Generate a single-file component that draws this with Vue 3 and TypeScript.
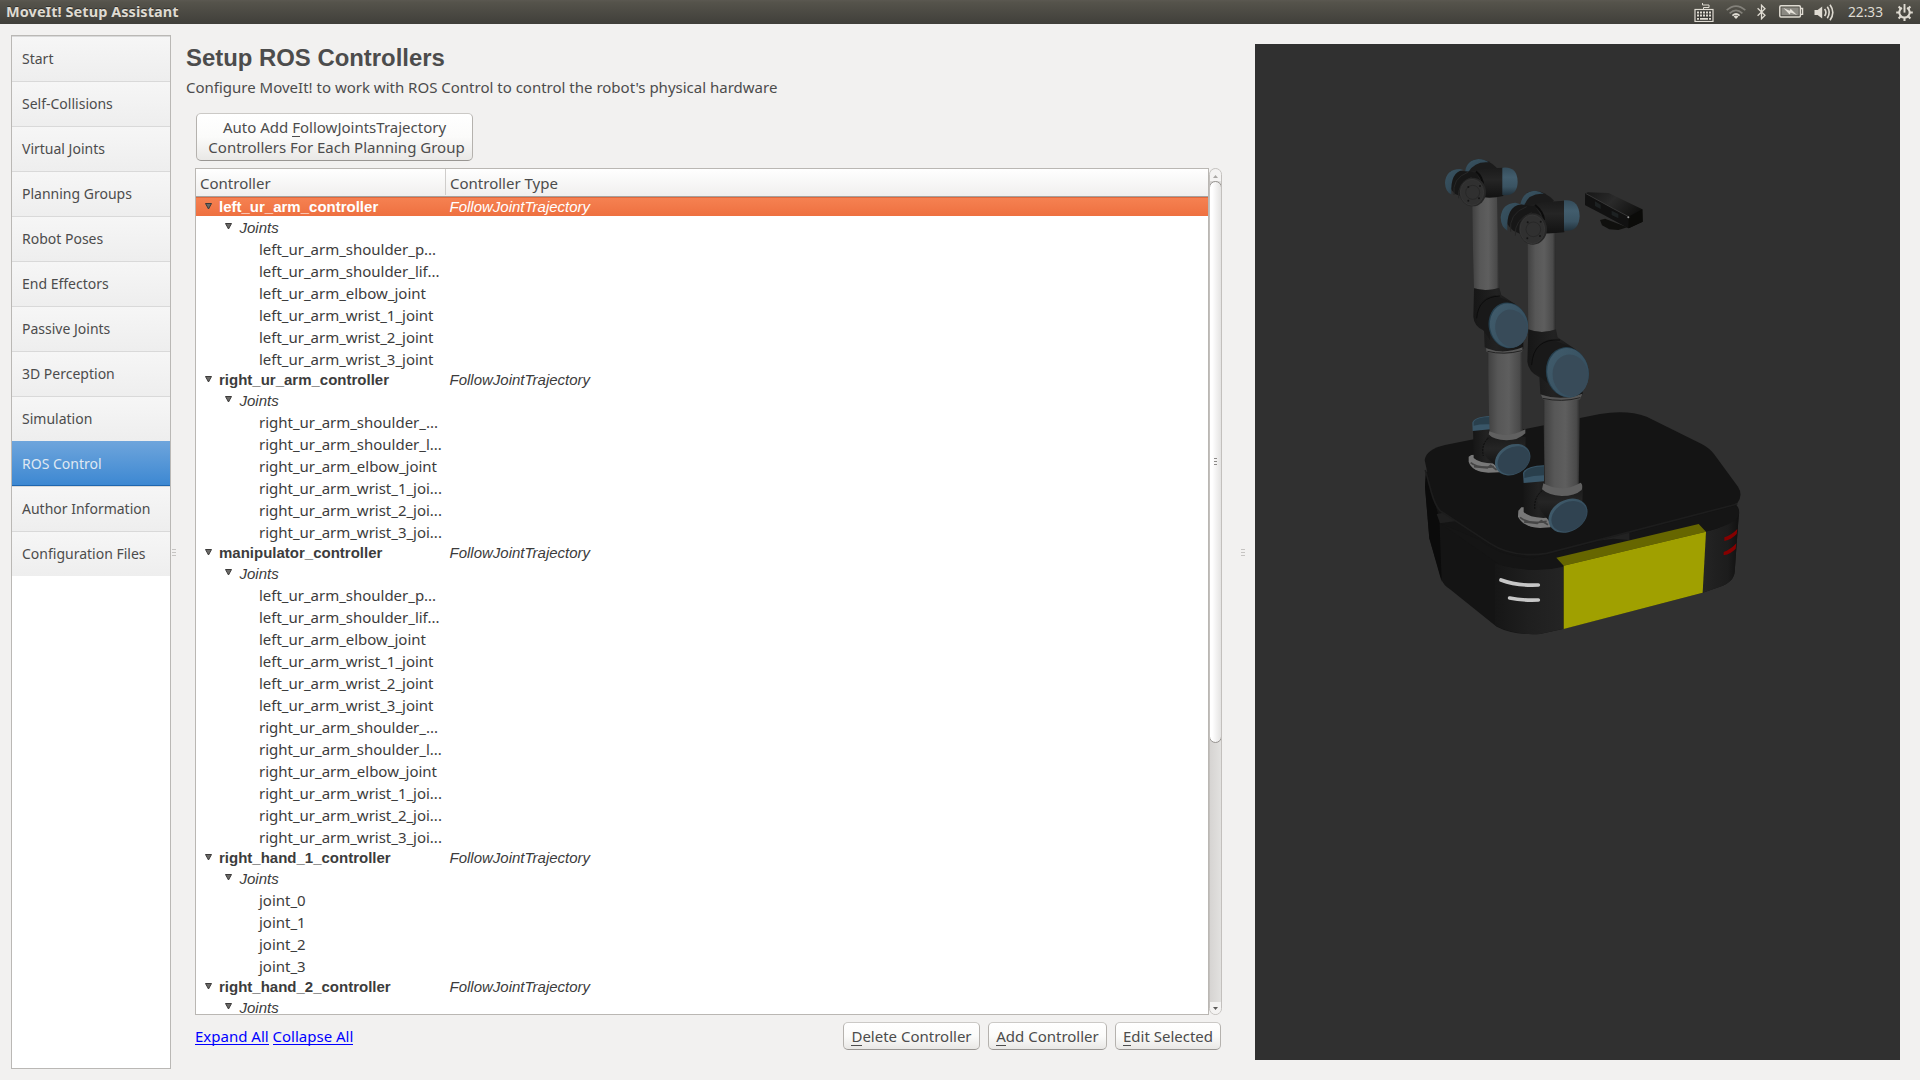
<script setup lang="ts">
import { ref } from 'vue'

interface Controller {
  name: string
  type: string
  joints: string[]
}

const sections: string[] = [
  'Start',
  'Self-Collisions',
  'Virtual Joints',
  'Planning Groups',
  'Robot Poses',
  'End Effectors',
  'Passive Joints',
  '3D Perception',
  'Simulation',
  'ROS Control',
  'Author Information',
  'Configuration Files',
]
const activeSection = ref('ROS Control')

const leftArm: string[] = [
  'left_ur_arm_shoulder_p...',
  'left_ur_arm_shoulder_lif...',
  'left_ur_arm_elbow_joint',
  'left_ur_arm_wrist_1_joint',
  'left_ur_arm_wrist_2_joint',
  'left_ur_arm_wrist_3_joint',
]
const rightArm: string[] = [
  'right_ur_arm_shoulder_...',
  'right_ur_arm_shoulder_l...',
  'right_ur_arm_elbow_joint',
  'right_ur_arm_wrist_1_joi...',
  'right_ur_arm_wrist_2_joi...',
  'right_ur_arm_wrist_3_joi...',
]
const type = 'FollowJointTrajectory'
const controllers: Controller[] = [
  { name: 'left_ur_arm_controller', type, joints: leftArm },
  { name: 'right_ur_arm_controller', type, joints: rightArm },
  { name: 'manipulator_controller', type, joints: [...leftArm, ...rightArm] },
  { name: 'right_hand_1_controller', type, joints: ['joint_0', 'joint_1', 'joint_2', 'joint_3'] },
  { name: 'right_hand_2_controller', type, joints: [] },
]
const selected = ref('left_ur_arm_controller')
</script>

<template>
  <div class="desktop">
    <header class="menubar">
      <span class="window-title">MoveIt! Setup Assistant</span>
      <div class="indicators">
        <svg class="i-keyboard" width="20" height="20" viewBox="0 0 20 20">
          <path d="M9.5 8V5.5H15V3H8.5V1" fill="none" stroke="#dfdbd2" stroke-width="1" />
          <rect x="1" y="7.5" width="18" height="12" fill="#3c3b37" stroke="#dfdbd2" stroke-width="1.2" />
          <path d="M3 10.5H17M3 13.5H17" stroke="#dfdbd2" stroke-width="2" stroke-dasharray="2 1" />
          <path d="M3 16.8H5M6 16.8H14M15 16.8H17" stroke="#dfdbd2" stroke-width="1.8" />
        </svg>
        <svg class="i-wifi" width="20" height="14" viewBox="0 0 20 14" fill="none" stroke-width="1.7">
          <path d="M.7 5.2Q10-3 19.3 5.2" stroke="#83817a" />
          <path d="M3.6 8.3Q10 2.4 16.4 8.3" stroke="#83817a" />
          <path d="M6.4 10.6Q10 7.4 13.6 10.6" stroke="#dfdbd2" />
          <path d="M7.6 11.4Q10 9.6 12.4 11.4L10 14Z" fill="#dfdbd2" stroke="none" />
        </svg>
        <svg class="i-bluetooth" width="9" height="16" viewBox="0 0 9 16">
          <path d="M.6 4.3L8 11.3L4.5 14.8V1.2L8 4.7L.6 11.7" fill="none" stroke="#dfdbd2" stroke-width="1.3" />
        </svg>
        <svg class="i-battery" width="25" height="13" viewBox="0 0 25 13">
          <rect x=".8" y=".8" width="20.6" height="11.2" rx="1.2" fill="none" stroke="#dfdbd2" stroke-width="1.5" />
          <rect x="2.5" y="2.5" width="17.2" height="7.8" fill="#8b8982" />
          <path d="M22 3.5H23.6V9.3H22" fill="none" stroke="#dfdbd2" stroke-width="1.3" />
          <path d="M4.4 3L10.6 5.8L11.6 3.8L18 10L11.7 7.6L10.6 9.4Z" fill="#e6e2da" />
        </svg>
        <svg class="i-volume" width="21" height="17" viewBox="0 0 21 17">
          <path d="M.5 6H3.6L8.2 2.4V14.6L3.6 11H.5Z" fill="#dfdbd2" />
          <g fill="none" stroke="#dfdbd2" stroke-width="1.6">
            <path d="M10.6 5Q13.2 8.5 10.6 12" />
            <path d="M13.3 2.8Q17.2 8.5 13.3 14.2" />
            <path d="M16 .8Q21.6 8.5 16 16.2" />
          </g>
        </svg>
        <span class="clock">22:33</span>
        <svg class="i-session" width="17" height="17" viewBox="0 0 17 17" fill="none" stroke="#dfdbd2">
          <path d="M5.9 3.9A5.2 5.2 0 1 0 11.1 3.9" stroke-width="2" />
          <path d="M8.5 0V8.6" stroke-width="1.9" />
          <path d="M2.6 2.6L4.6 4.6M14.4 2.6L12.4 4.6M.2 8.5H3M14 8.5H16.8M2.6 14.4L4.6 12.4M14.4 14.4L12.4 12.4M8.5 14V16.9" stroke-width="2.1" />
        </svg>
      </div>
    </header>

    <div class="body">
      <nav class="sections">
        <div v-for="s in sections" :key="s" class="section" :class="{ active: s === activeSection }" @click="activeSection = s">{{ s }}</div>
      </nav>
      <div class="grip grip-left"><i /><i /><i /></div>

      <main class="content">
        <h1>Setup ROS Controllers</h1>
        <p class="intro">Configure MoveIt! to work with ROS Control to control the robot's physical hardware</p>
        <button class="btn auto">{{ 'Auto Add ' }}<u>F</u>{{ 'ollowJointsTrajectory \nControllers For Each Planning Group' }}</button>

        <div class="tree-wrap">
          <div class="tree">
            <div class="tree-head">
              <div class="col-name">Controller</div>
              <div class="col-type">Controller Type</div>
            </div>
            <div class="tree-body">
              <template v-for="c in controllers" :key="c.name">
                <div class="row ctrl" :class="{ selected: c.name === selected }" @click="selected = c.name">
                  <div class="name">
                    <svg width="7" height="7" viewBox="0 0 7 7"><path d="M.5 .5H6.5L3.5 6Z" fill="#6b6a68" stroke="#3c3b3a" /></svg>
                    {{ c.name }}
                  </div>
                  <div class="type">{{ c.type }}</div>
                </div>
                <div class="row group">
                  <svg width="7" height="7" viewBox="0 0 7 7"><path d="M.5 .5H6.5L3.5 6Z" fill="#6b6a68" stroke="#3c3b3a" /></svg>
                  Joints
                </div>
                <div v-for="j in c.joints" :key="j" class="row leaf">{{ j }}</div>
              </template>
            </div>
          </div>
          <div class="scrollbar">
            <div class="arrow"><svg width="5" height="3" viewBox="0 0 5 3"><path d="M0 3L2.5 0L5 3Z" fill="#a9a7a4" /></svg></div>
            <div class="thumb"><i /><i /><i /></div>
            <div class="arrow down"><svg width="5" height="3" viewBox="0 0 5 3"><path d="M0 0L2.5 3L5 0Z" fill="#5c5b59" /></svg></div>
          </div>
        </div>

        <div class="actions">
          <div class="links"><a>Expand All</a> <a>Collapse All</a></div>
          <div class="buttons">
            <button class="btn b-del"><span><u>D</u>elete Controller</span></button>
            <button class="btn b-add"><span><u>A</u>dd Controller</span></button>
            <button class="btn b-edit"><span><u>E</u>dit Selected</span></button>
          </div>
        </div>
      </main>

      <div class="grip grip-right"><i /><i /><i /></div>

      <svg class="viewport" width="645" height="1016" viewBox="0 0 1935 3048">
        <defs>
          <linearGradient id="tube">
            <stop offset="0" stop-color="#2c2c2c" /><stop offset=".05" stop-color="#434343" />
            <stop offset=".3" stop-color="#575757" /><stop offset=".6" stop-color="#5e5e5e" />
            <stop offset=".9" stop-color="#4a4a4a" /><stop offset="1" stop-color="#2a2a2a" />
          </linearGradient>
          <linearGradient id="cap" x1="0" y1="0" x2="0" y2="1">
            <stop offset="0" stop-color="#344c5a" /><stop offset=".35" stop-color="#425d6d" />
            <stop offset=".7" stop-color="#3a5362" /><stop offset="1" stop-color="#22323c" />
          </linearGradient>
          <linearGradient id="rearCap" x1="0" y1="0" x2="1" y2="1">
            <stop offset="0" stop-color="#3a5462" /><stop offset=".5" stop-color="#334b59" /><stop offset="1" stop-color="#1d2c35" />
          </linearGradient>
          <linearGradient id="rim" x1="0" y1="0" x2="1" y2="1">
            <stop offset="0" stop-color="#415c6c" /><stop offset=".5" stop-color="#3a5464" /><stop offset="1" stop-color="#31495a" />
          </linearGradient>
          <linearGradient id="shell">
            <stop offset="0" stop-color="#161616" /><stop offset=".45" stop-color="#222" /><stop offset="1" stop-color="#131313" />
          </linearGradient>
          <linearGradient id="shellV" x1="0" y1="0" x2="0" y2="1">
            <stop offset="0" stop-color="#1b1b1b" /><stop offset=".4" stop-color="#252525" /><stop offset="1" stop-color="#121212" />
          </linearGradient>
          <linearGradient id="front">
            <stop offset="0" stop-color="#161616" /><stop offset=".5" stop-color="#1f1f1f" /><stop offset="1" stop-color="#242424" />
          </linearGradient>
          <linearGradient id="frontR">
            <stop offset="0" stop-color="#242424" /><stop offset=".7" stop-color="#1c1c1c" /><stop offset="1" stop-color="#101010" />
          </linearGradient>
          <linearGradient id="sensor" x1="0" y1="0" x2="1" y2=".6">
            <stop offset="0" stop-color="#161616" /><stop offset=".45" stop-color="#2a2a2a" /><stop offset="1" stop-color="#0c0c0b" />
          </linearGradient>
        </defs>
        <rect width="1935" height="3048" fill="#303030" />

        <!-- mobile base -->
        <g transform="translate(435 1188)">
          <path d="M78 95L75 140L88 295L125 420Q130 435 150 448L290 560Q340 586 420 582L492 566L908 458L960 440Q1002 425 1004 395L1017 215Q1016 195 1000 190Z" fill="#141414" />
          <path d="M78 95L75 140L88 295L125 425L118 235Z" fill="#0b0b0b" />
          <path d="M285 370Q380 400 490 376V566L420 582Q340 586 285 556Z" fill="url(#front)" />
          <path d="M915 275Q985 262 1017 215L1004 395Q1002 425 960 440L908 458Z" fill="url(#frontR)" />
          <path d="M110 222L140 217L170 243L120 250Z" fill="#1f1f1f" />
          <path d="M240 300Q300 350 400 355L1005 197Q1022 205 1016 228Q1000 255 915 275L490 380Q400 402 300 375L120 250Z" fill="#151515" />
          <path d="M590 303L688 277V300L640 296Z" fill="#222" />
        </g>
        <g transform="translate(435 828)">
          <path d="M74 420Q78 388 135 375L600 282Q680 268 740 290L905 372Q928 384 942 402L1014 500Q1030 525 1012 550L440 700Q340 715 270 670L120 572Q105 555 95 520Z" fill="#141414" />
          <path d="M76 450L95 520Q105 555 120 572L270 670Q340 715 440 700L1012 552" fill="none" stroke="#1d1d1d" stroke-width="5" />
        </g>
        <g transform="translate(435 1188)">
          <path d="M469 353L896 252L918 275L491 377Z" fill="#666600" />
          <path d="M491 377L918 275L908 458L491 567Z" fill="#a0a000" />
          <g fill="none" stroke="#c6c6c6" stroke-width="11" stroke-linecap="round">
            <path d="M303 420Q350 438 415 435" /><path d="M329 474Q365 482 415 480" />
          </g>
          <path d="M973 292Q995 285 1012 267L1010 282Q995 298 973 303ZM971 336Q993 328 1009 310L1007 326Q993 341 971 346Z" fill="#850000" />
        </g>

        <!-- rear arm -->
        <g transform="translate(435 828)">
          <path d="M214 405L206 410V425Q215 455 265 458L300 457L300 400Z" fill="#787878" />
          <path d="M212 428Q232 446 282 440M222 440L262 444L272 436L290 450" stroke="#464646" fill="none" stroke-width="5" />
          <path d="M219 325L271 318V345L310 410L290 430Q240 432 221 414Z" fill="url(#shell)" />
          <path d="M217 308Q222 290 271 288V328L218 333Z" fill="#395668" />
          <path d="M221 306Q230 291 271 291V313Q240 312 221 317Z" fill="#293f4c" />
          <path d="M262 350H377L376 385Q350 430 290 440L262 415Q240 390 262 350Z" fill="url(#shellV)" />
          <path d="M264 355Q243 375 250 408" fill="none" stroke="#0d0d0d" stroke-width="3" stroke-dasharray="6 3" />
          <path d="M262 94H365L369 345Q320 362 269 345Z" fill="url(#tube)" />
          <path d="M268 334Q320 358 376 328V340Q355 361 320 361Q280 360 266 343Z" fill="#606060" />
          <ellipse cx="338" cy="419" rx="56" ry="44" transform="rotate(-30 338 419)" fill="url(#rim)" />
          <ellipse cx="341" cy="421" rx="51" ry="39" transform="rotate(-30 341 421)" fill="#304351" />
        </g>
        <g transform="translate(435 288)">
          <path d="M215 165H291L298 445Q260 456 222 445Z" fill="url(#tube)" />
          <path d="M222 445Q260 456 298 443L304 465L345 492Q385 530 370 600V627Q310 648 254 622L252 572Q222 560 220 530Z" fill="url(#shell)" />
          <path d="M228 538Q235 470 285 466L345 492L268 545L270 600" fill="#191919" />
          <path d="M300 468Q235 470 230 535" fill="none" stroke="#0c0c0c" stroke-width="3" />
          <path d="M258 625Q310 645 368 622L366 636Q310 648 260 636Z" fill="#565656" />
          <path d="M262 634Q310 646 366 632" fill="none" stroke="#222" stroke-width="3" />
          <ellipse cx="325" cy="556" rx="59" ry="69" transform="rotate(-12 325 556)" fill="#26404f" />
          <ellipse cx="327" cy="557" rx="57" ry="67" transform="rotate(-12 327 557)" fill="url(#rim)" />
          <ellipse cx="334" cy="565" rx="48" ry="57" transform="rotate(-12 334 565)" fill="#384b59" />
          <path d="M195 100Q200 60 235 57Q265 58 290 83L250 110Z" fill="#1b1b1b" />
          <path d="M195 96Q200 60 235 57Q255 58 266 67Q225 63 205 96Z" fill="url(#rearCap)" />
          <path d="M200 100Q240 85 290 84L310 83V168Q280 175 250 172Z" fill="url(#shellV)" />
          <path d="M307 83Q352 78 353 125Q352 170 307 165Z" fill="url(#cap)" />
          <path d="M228 95Q248 110 250 140" fill="none" stroke="#0c0c0c" stroke-width="6" />
          <path d="M150 95Q170 88 228 98L258 150L215 180L165 162Q140 140 150 95Z" fill="#171717" />
          <path d="M135 128Q138 88 180 87L190 90Q150 95 154 163Q136 155 135 128Z" fill="url(#rearCap)" />
          <path d="M162 165Q155 115 205 96M176 175Q170 130 215 112" fill="none" stroke="#262626" stroke-width="3" />
          <ellipse cx="218" cy="156" rx="40" ry="43" fill="#272727" />
          <ellipse cx="216" cy="157" rx="35" ry="39" fill="#303030" stroke="#3a3a3a" stroke-width="2" />
          <circle cx="218" cy="157" r="21" fill="none" stroke="#222" stroke-width="2" />
          <g fill="#151515"><circle cx="205" cy="141" r="3" /><circle cx="240" cy="138" r="3" /><circle cx="237" cy="175" r="3" /><circle cx="205" cy="182" r="3" /></g>
        </g>

        <!-- front arm -->
        <g transform="translate(435 828)">
          <path d="M364 562L355 572L354 590Q370 622 420 624L452 622L450 560Z" fill="#787878" />
          <path d="M360 592Q385 614 440 604M372 606L412 610L424 602L444 614" stroke="#464646" fill="none" stroke-width="5" />
          <path d="M371 480L432 472V520L470 590L430 594Q385 592 371 576Z" fill="url(#shell)" />
          <path d="M369 458Q378 438 432 436V484L371 489Z" fill="#395668" />
          <path d="M373 458Q384 440 432 439V466Q400 466 373 474Z" fill="#293f4c" />
          <path d="M427 505H549L547 545Q520 590 450 607L425 575Q400 540 427 505Z" fill="url(#shellV)" />
          <path d="M425 513Q400 535 405 570" fill="none" stroke="#0d0d0d" stroke-width="3" stroke-dasharray="6 3" />
          <path d="M430 238H540L536 505Q485 525 434 505Z" fill="url(#tube)" />
          <path d="M430 490Q485 520 542 488Q550 495 545 510Q525 528 485 528Q445 526 426 508Z" fill="#606060" />
          <ellipse cx="504" cy="587" rx="62" ry="47" transform="rotate(-30 504 587)" fill="url(#rim)" />
          <ellipse cx="507" cy="589" rx="56" ry="42" transform="rotate(-30 507 589)" fill="#304351" />
        </g>
        <g transform="translate(435 288)">
          <path d="M381 275H466L467 570Q425 582 385 570Z" fill="url(#tube)" />
          <path d="M385 568Q425 584 468 568L473 592L525 627Q570 660 548 740V763Q485 788 421 762L418 712Q385 695 382 665Z" fill="url(#shell)" />
          <path d="M394 685Q395 605 455 598L520 625L440 680L442 730" fill="#191919" />
          <path d="M480 600Q400 595 395 675" fill="none" stroke="#0c0c0c" stroke-width="3" />
          <path d="M423 764Q485 784 547 761L540 778Q485 788 429 778Z" fill="#565656" />
          <path d="M428 775Q485 788 541 773" fill="none" stroke="#222" stroke-width="3" />
          <ellipse cx="502" cy="697" rx="64" ry="76" transform="rotate(-10 502 697)" fill="#26404f" />
          <ellipse cx="504" cy="698" rx="62" ry="74" transform="rotate(-10 504 698)" fill="url(#rim)" />
          <ellipse cx="511" cy="706" rx="53" ry="63" transform="rotate(-10 511 706)" fill="#384b59" />
          <path d="M362 198Q370 153 405 152Q435 153 462 182L420 215Z" fill="#1b1b1b" />
          <path d="M361 193Q370 153 405 152Q420 153 432 162Q388 158 373 195Z" fill="url(#rearCap)" />
          <path d="M372 200Q420 184 493 182V277Q460 281 430 280Z" fill="url(#shellV)" />
          <path d="M492 181Q537 176 539 228Q537 277 492 272Z" fill="url(#cap)" />
          <path d="M405 195Q430 215 432 240" fill="none" stroke="#0c0c0c" stroke-width="6" />
          <path d="M320 198Q345 190 405 198L440 255L390 295L340 272Q305 245 320 198Z" fill="#171717" />
          <path d="M302 232Q306 190 346 188L362 193Q318 200 322 272Q303 262 302 232Z" fill="url(#rearCap)" />
          <path d="M332 275Q325 220 380 200M346 287Q342 238 395 218" fill="none" stroke="#262626" stroke-width="3" />
          <ellipse cx="399" cy="267" rx="42" ry="47" fill="#272727" />
          <ellipse cx="397" cy="268" rx="37" ry="43" fill="#303030" stroke="#3a3a3a" stroke-width="2" />
          <circle cx="400" cy="268" r="22" fill="none" stroke="#222" stroke-width="2" />
          <g fill="#151515"><circle cx="383" cy="247" r="3" /><circle cx="422" cy="245" r="3" /><circle cx="420" cy="288" r="3" /><circle cx="382" cy="295" r="3" /></g>
        </g>

        <!-- depth camera -->
        <g transform="translate(435 288)">
          <path d="M600 240L615 236L682 262L655 270L628 268L606 256Z" fill="#10100e" />
          <path d="M556 160L564 157L626 159L727 208L728 245L686 265L555 195Z" fill="url(#sensor)" />
          <path d="M556 161L686 230V264L555 195Z" fill="#111" />
          <path d="M686 230L727 208L728 245L686 265Z" fill="#0b0b09" />
          <path d="M558 161L640 206L684 229" fill="none" stroke="#444" stroke-width="2" />
          <path d="M585 184L602 194V207L585 198ZM635 212L655 222V235L635 225Z" fill="#1d2122" />
          <circle cx="685" cy="232" r="3" fill="#999" />
        </g>
      </svg>
    </div>
  </div>
</template>

<style>
body { margin: 0; overflow: hidden; background: #f2f1f0; }
</style>

<style scoped>
.desktop { width: 1920px; height: 1080px; display: flex; flex-direction: column; background: #f2f1f0; color: #4c4c4c; font: 15px/20px "Noto Sans", "Open Sans", sans-serif; overflow: hidden; }
.menubar { box-sizing: border-box; height: 24px; flex: none; display: flex; justify-content: space-between; padding: 0 7px 0 6px; background: linear-gradient(#5b5851 0, #55534b 10%, #403f3a 100%); color: #dfdbd2; }
.window-title { font-weight: 700; font-size: 14.5px; line-height: 23px; letter-spacing: .05px; text-shadow: 0 -1px #33322e; }
.indicators { display: flex; align-items: flex-start; }
.indicators svg { flex: none; display: block; }
.i-keyboard { margin: 2px 12px 0 0; }
.i-wifi { margin: 5px 11px 0 0; }
.i-bluetooth { margin: 4px 13px 0 0; }
.i-battery { margin: 5px 10px 0 0; }
.i-volume { margin: 4px 13px 0 0; }
.clock { font-size: 13.7px; line-height: 24px; width: 35px; margin-right: 13px; }
.i-session { margin-top: 4px; }

.body { flex: 1; display: flex; align-items: flex-start; padding: 11px 20px 0 11px; }
.sections { box-sizing: border-box; width: 160px; height: 1034px; background: #fff; border: 1px solid #bab8b5; font-size: 14px; flex: none; }
.section { box-sizing: border-box; height: 45px; padding-left: 10px; line-height: 44px; border-top: 1px solid #d9d9d9; background: linear-gradient(#f6f6f6, #eee); white-space: nowrap; }
.section.active { color: #dfe8f2; border-top: 0; border-bottom: 1px solid #1f66ae; line-height: 46px; background: linear-gradient(#6ea5dc, #3d88d2); }

.grip { display: flex; flex-direction: column; gap: 2px; width: 4px; flex: none; }
.grip i { height: 1px; background: #c6c4c2; }
.grip-left { margin: 514px 10px 0 1px; }
.grip-right { margin: 514px 10px 0 19px; }

.content { width: 1036px; flex: none; display: flex; flex-direction: column; }
h1 { margin: 9px 0 0; font: 700 23.9px/28px "Liberation Sans", Arial, sans-serif; color: #4c4c4c; }
.intro { margin: 5px 0 0; line-height: 20px; }
.btn { box-sizing: border-box; padding: 0; border: 1px solid #b5b2ae; border-top-color: #cbc9c6; border-bottom-color: #999693; border-radius: 5px; background: linear-gradient(#fff, #fbfbfa 50%, #e9e8e6); color: #4c4c4c; font: inherit; white-space: nowrap; }
.btn u { text-decoration: none; box-shadow: inset 0 -1px #4c4c4c; display: inline-block; line-height: 20px; height: 20px; vertical-align: top; }
.auto { width: 277px; height: 48px; margin: 16px 0 0 10px; padding: 0 0 1px 4px; line-height: 20px; white-space: pre; }

.tree-wrap { display: flex; margin: 7px 0 0 9px; height: 847px; }
.tree { box-sizing: border-box; width: 1014px; height: 847px; border: 1px solid #bab7b3; background: #fff; overflow: hidden; display: flex; flex-direction: column; color: #3c3c3c; }
.tree-head { box-sizing: border-box; flex: none; display: flex; height: 28px; border-bottom: 1px solid #a5a19d; background: linear-gradient(#fff, #f0efee); color: #4c4c4c; line-height: 28px; }
.tree-head > div { height: 26px; }
.col-name { box-sizing: border-box; width: 250px; padding-left: 4px; border-right: 1px solid #cfcdcb; }
.col-type { padding-left: 4px; }
.tree-body { flex: 1; overflow: hidden; }
.row { display: flex; white-space: nowrap; }
.ctrl { height: 19px; line-height: 19px; font-family: "Liberation Sans", Arial, sans-serif; }
.ctrl .name { width: 253.5px; display: flex; font-weight: 700; }
.ctrl svg { margin: 6px 7px 0 9px; }
.ctrl .type { font-style: italic; }
.ctrl.selected { background: linear-gradient(#f68252, #ee7040); color: #fff; box-shadow: inset 0 1px #e0683c; }
.group { height: 22px; line-height: 23px; font-family: "Liberation Sans", Arial, sans-serif; font-style: italic; }
.group svg { margin: 7px 7.5px 0 29px; }
.leaf { height: 22px; line-height: 22px; padding-left: 63px; letter-spacing: -.015px; }

.scrollbar { box-sizing: border-box; width: 13px; height: 847px; border: 1px solid #c3c0bd; border-radius: 7px; background: linear-gradient(90deg, #d6d4d2, #e2e1df); display: flex; flex-direction: column; align-items: center; overflow: hidden; }
.arrow { width: 11px; height: 12px; flex: none; display: flex; align-items: center; justify-content: center; background: #f4f3f2; }
.arrow svg { margin-top: 3px; }
.arrow.down svg { margin-top: 0; }
.arrow.down { margin-top: auto; }
.thumb { box-sizing: border-box; width: 13px; height: 562px; flex: none; padding-bottom: 2px; border: 1px solid #979491; border-radius: 7px; background: linear-gradient(90deg, #fff 20%, #e4e3e2); display: flex; flex-direction: column; align-items: center; justify-content: center; gap: 2px; }
.thumb i { width: 3px; height: 1px; background: #8b8987; }

.actions { display: flex; justify-content: space-between; margin: 7px 1px 0 9px; height: 28px; }
.links { line-height: 20px; padding-top: 4px; color: #00f; }
.links a { display: inline-block; height: 19px; border-bottom: 1px solid #00f; box-sizing: border-box; line-height: 20px; vertical-align: top; }
.buttons { display: flex; gap: 8px; }
.buttons .btn { height: 28px; line-height: 20px; padding-bottom: 1px; }
.b-del { width: 137px; }
.b-add { width: 119px; }
.b-edit { width: 106px; }
.viewport { display: block; flex: none; margin-top: 9px; }
</style>
